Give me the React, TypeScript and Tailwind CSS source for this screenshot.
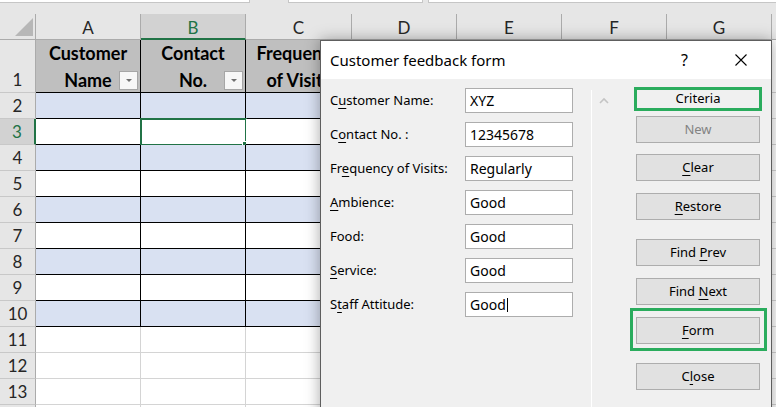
import React from "react";

type Col = { key: string; w: string; lines: string[] };

// columns D-G sit under the dialog, so their captions are left out
const COLS: Col[] = [
  { key: "A", w: "w-[105px]", lines: ["Customer", "Name"] },
  { key: "B", w: "w-[105px]", lines: ["Contact", "No."] },
  { key: "C", w: "w-[106px]", lines: ["Frequency", "of Visits"] },
  { key: "D", w: "w-[105px]", lines: [] },
  { key: "E", w: "w-[105px]", lines: [] },
  { key: "F", w: "w-[105px]", lines: [] },
  { key: "G", w: "w-[105px]", lines: [] },
];

const sheetFont = { fontFamily: "Lato, 'Liberation Sans', sans-serif" };
const uiFont = { fontFamily: "'Noto Sans', 'Open Sans', sans-serif" };

const FilterButton = () => (
  <span className="absolute right-[2px] bottom-[2px] flex h-[19px] w-[19px] items-center justify-center border border-[#a6a6a6] bg-[#f7f7f7]">
    <svg width="8" height="5" viewBox="0 0 8 5">
      <path d="M1 1h6L4 4z" fill="#707070" />
    </svg>
  </span>
);

const RowHeader = ({ n, selected }: { n?: number; selected?: boolean }) => (
  <div
    className={
      selected
        ? "flex w-[36px] shrink-0 items-end justify-center border-r-2 border-b border-r-[#217346] border-b-[#c8c8c8] bg-[#d2d2d2] pb-[1px] text-[17px] leading-[22px] text-[#217346]"
        : "flex w-[36px] shrink-0 items-end justify-center border-r border-b border-r-[#ababab] border-b-[#c8c8c8] bg-[#e6e6e6] pb-[1px] text-[17px] leading-[22px] text-[#262626]"
    }
  >
    {n}
  </div>
);

const Ul = ({ children }: { children: React.ReactNode }) => (
  <span className="underline underline-offset-[3px]">{children}</span>
);

const Sheet = () => {
  const dataRows = [2, 3, 4, 5, 6, 7, 8, 9, 10];
  const emptyRows = [11, 12, 13];
  return (
    <div className="flex h-full w-full flex-col bg-white" style={sheetFont}>
      {/* formula bar edge */}
      <div className="flex h-[14px] shrink-0 items-start bg-[#e6e6e6]">
        <div className="h-[3px] w-[250px] border-r border-b border-[#c6c6c6] bg-white" />
        <div className="w-[38px]" />
        <div className="h-[3px] w-[135px] border-x border-b border-[#c6c6c6] bg-white" />
        <div className="w-[5px]" />
        <div className="h-[3px] flex-1 border-l border-b border-[#c6c6c6] bg-white" />
      </div>

      {/* column letters */}
      <div className="flex h-[26px] shrink-0 bg-[#e6e6e6]">
        <div className="relative w-[36px] shrink-0 border-r border-b border-[#ababab]">
          <svg className="absolute left-[15px] top-[4px]" width="18" height="18" viewBox="0 0 18 18">
            <path d="M18 0V18H0z" fill="#b7b7b7" />
          </svg>
        </div>
        {COLS.map((c) =>
          c.key === "B" ? (
            <div
              key={c.key}
              className={`${c.w} flex shrink-0 items-center justify-center border-r border-b-2 border-r-[#ababab] border-b-[#217346] bg-[#d2d2d2] pt-[3px] text-[17px] text-[#217346]`}
            >
              {c.key}
            </div>
          ) : (
            <div
              key={c.key}
              className={`${c.w} flex shrink-0 items-center justify-center border-r border-b border-[#ababab] pt-[2px] text-[17px] text-[#262626]`}
            >
              {c.key}
            </div>
          )
        )}
        <div className="flex-1 border-b border-[#ababab]" />
      </div>

      {/* row 1: table header */}
      <div className="flex h-[53px] shrink-0">
        <RowHeader n={1} />
        {COLS.map((c) => (
          <div
            key={c.key}
            className={`${c.w} relative flex shrink-0 flex-col items-center justify-start overflow-hidden border-r border-b border-black bg-[#bfbfbf] text-[18px] leading-[27px] font-bold text-black`}
          >
            {c.lines.map((l) => (
              <span key={l} className="whitespace-nowrap">
                {l}
              </span>
            ))}
            <FilterButton />
          </div>
        ))}
        <div className="flex-1 border-b border-[#d4d4d4]" />
      </div>

      {dataRows.map((n) => (
        <div key={n} className="flex h-[26px] shrink-0">
          <RowHeader n={n} selected={n === 3} />
          {COLS.map((c) => (
            <div
              key={c.key}
              className={`${c.w} relative shrink-0 border-r border-b border-black ${
                n % 2 === 0 ? "bg-[#d9e1f2]" : "bg-white"
              }`}
            >
              {n === 3 && c.key === "B" && (
                <div className="absolute -left-[1px] -top-[1px] h-[28px] w-[107px] border-2 border-[#217346]">
                  <span className="absolute -right-[4px] -bottom-[4px] h-[7px] w-[7px] border border-white bg-[#217346]" />
                </div>
              )}
            </div>
          ))}
          <div className="flex-1 border-b border-[#d4d4d4]" />
        </div>
      ))}

      {emptyRows.map((n) => (
        <div key={n} className="flex h-[26px] shrink-0">
          <RowHeader n={n} />
          {COLS.map((c) => (
            <div key={c.key} className={`${c.w} shrink-0 border-r border-b border-[#d4d4d4]`} />
          ))}
          <div className="flex-1 border-b border-[#d4d4d4]" />
        </div>
      ))}

      {/* row 14, only its top edge shows */}
      <div className="flex flex-1">
        <div className="w-[36px] shrink-0 border-r border-[#ababab] bg-[#e6e6e6]" />
        {COLS.map((c) => (
          <div key={c.key} className={`${c.w} shrink-0 border-r border-[#d4d4d4]`} />
        ))}
      </div>
    </div>
  );
};

const fields: { label: React.ReactNode; value: string; cursor?: boolean }[] = [
  { label: <>C<Ul>u</Ul>stomer Name:</>, value: "XYZ" },
  { label: <>C<Ul>o</Ul>ntact No. :</>, value: "12345678" },
  { label: <>Fr<Ul>e</Ul>quency of Visits:</>, value: "Regularly" },
  { label: <><Ul>A</Ul>mbience:</>, value: "Good" },
  { label: <>Food:</>, value: "Good" },
  { label: <><Ul>S</Ul>ervice:</>, value: "Good" },
  { label: <>S<Ul>t</Ul>aff Attitude:</>, value: "Good", cursor: true },
];

const Btn = ({ children, disabled }: { children: React.ReactNode; disabled?: boolean }) => (
  <div
    className={`flex h-[27px] w-[124px] items-center justify-center border border-[#adadad] bg-[#e1e1e1] text-[13px] ${
      disabled ? "text-[#838383]" : "text-black"
    }`}
  >
    {children}
  </div>
);

const DataForm = () => (
  <div
    className="absolute left-[320px] top-[40px] flex h-[400px] w-[452px] flex-col border border-[#5e5e5e] bg-[#f0f0f0] shadow-[0_0_14px_rgba(0,0,0,0.35)]"
    style={uiFont}
  >
    {/* title bar */}
    <div className="flex h-[38px] shrink-0 items-center bg-white pl-[9px] text-[15px] text-black">
      <span className="flex-1">Customer feedback form</span>
      <span className="mr-[47px] text-[16px]">?</span>
      <svg className="mr-[24px]" width="12" height="12" viewBox="0 0 12 12">
        <path d="M0.5 0.5L11.5 11.5M11.5 0.5L0.5 11.5" stroke="#000" strokeWidth="1.1" />
      </svg>
    </div>

    <div className="flex flex-1">
      {/* fields */}
      <div className="flex w-[270px] shrink-0 flex-col gap-[9px] pl-[9px] pt-[9px]">
        {fields.map((f, i) => (
          <div key={i} className="flex h-[25px] items-center text-[13px] text-black">
            <span className="w-[135px] shrink-0 whitespace-nowrap">{f.label}</span>
            <div className="flex h-[25px] w-[108px] items-center border border-[#adadad] bg-white pl-[4px] text-[14px]">
              {f.value}
              {f.cursor && <span className="ml-[1px] h-[14px] w-[1px] bg-black" />}
            </div>
          </div>
        ))}
      </div>

      {/* scrollbar */}
      <div className="mt-[11px] flex w-[45px] shrink-0 border-l border-white pl-[7px] pt-[7px]">
        <svg width="10" height="7" viewBox="0 0 10 7">
          <path d="M1 6L5 2L9 6" fill="none" stroke="#c4c4c4" strokeWidth="1.6" />
        </svg>
      </div>

      {/* buttons */}
      <div className="flex w-[124px] shrink-0 flex-col">
        <div className="-mx-[2px] mt-[8px] flex h-[24px] w-[128px] items-center justify-center border-[3px] border-[#2aac5d] text-[13px] text-black">
          Criteria
        </div>
        <div className="mt-[5px]">
          <Btn disabled>New</Btn>
        </div>
        <div className="mt-[11px]">
          <Btn>
            <Ul>C</Ul>lear
          </Btn>
        </div>
        <div className="mt-[12px]">
          <Btn>
            <Ul>R</Ul>estore
          </Btn>
        </div>
        <div className="mt-[19px]">
          <Btn>
            Find&nbsp;<Ul>P</Ul>rev
          </Btn>
        </div>
        <div className="mt-[12px]">
          <Btn>
            Find&nbsp;<Ul>N</Ul>ext
          </Btn>
        </div>
        <div className="-ml-[6px] mt-[3px] w-[137px] border-[3px] border-[#2aac5d] pt-[6px] pb-[4px] pl-[3px]">
          <Btn>
            <Ul>F</Ul>orm
          </Btn>
        </div>
        <div className="mt-[12px]">
          <Btn>
            C<Ul>l</Ul>ose
          </Btn>
        </div>
      </div>
    </div>
  </div>
);

export default function App() {
  return (
    <div className="relative h-[407px] w-[776px] overflow-hidden">
      <Sheet />
      <DataForm />
    </div>
  );
}
